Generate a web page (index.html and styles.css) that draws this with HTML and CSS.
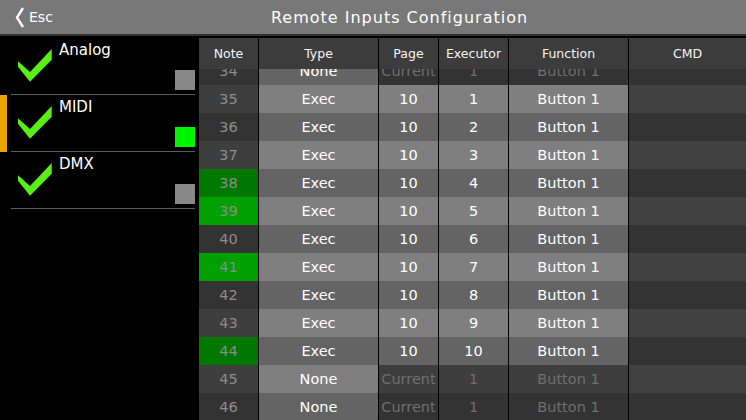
FILE: index.html
```html
<!DOCTYPE html>
<html>
<head>
<meta charset="utf-8">
<link rel="stylesheet" href="styles.css">
</head>
<body>
<div class="app">
  <header class="topbar">
    <div class="esc">
      <svg class="chev" width="10" height="22" viewBox="0 0 10 22"><polyline points="8,1 2,10.5 8,20" fill="none" stroke="#fff" stroke-width="2.4" stroke-linejoin="miter"/></svg>
      <span>Esc</span>
    </div>
    <div class="title">Remote Inputs Configuration</div>
  </header>
  <div class="main">
    <aside class="sidebar">
      <div class="item">
        <div class="ind"></div>
        <div class="item-body">
          <svg class="check" width="34" height="34" viewBox="0 0 34 34"><polygon points="0,12.3 12,23 33.7,0 33.7,10.7 12,32.7 0,17.7" fill="#5aef14"/></svg>
          <span class="label">Analog</span>
          <span class="sq"></span>
        </div>
      </div>
      <div class="item">
        <div class="ind on"></div>
        <div class="item-body">
          <svg class="check" width="34" height="34" viewBox="0 0 34 34"><polygon points="0,12.3 12,23 33.7,0 33.7,10.7 12,32.7 0,17.7" fill="#5aef14"/></svg>
          <span class="label">MIDI</span>
          <span class="sq green"></span>
        </div>
      </div>
      <div class="item">
        <div class="ind"></div>
        <div class="item-body">
          <svg class="check" width="34" height="34" viewBox="0 0 34 34"><polygon points="0,12.3 12,23 33.7,0 33.7,10.7 12,32.7 0,17.7" fill="#5aef14"/></svg>
          <span class="label">DMX</span>
          <span class="sq"></span>
        </div>
      </div>
    </aside>
    <section class="grid">
      <div class="thead">
        <div class="c note">Note</div>
        <div class="c type">Type</div>
        <div class="c page">Page</div>
        <div class="c exe">Executor</div>
        <div class="c func">Function</div>
        <div class="c cmd">CMD</div>
      </div>
      <div class="tbody">
        <div class="rows">
          <div class="row even none"><div class="c note">34</div><div class="c type">None</div><div class="c page">Current</div><div class="c exe">1</div><div class="c func">Button 1</div><div class="c cmd"></div></div>
          <div class="row odd"><div class="c note">35</div><div class="c type">Exec</div><div class="c page">10</div><div class="c exe">1</div><div class="c func">Button 1</div><div class="c cmd"></div></div>
          <div class="row even"><div class="c note">36</div><div class="c type">Exec</div><div class="c page">10</div><div class="c exe">2</div><div class="c func">Button 1</div><div class="c cmd"></div></div>
          <div class="row odd"><div class="c note">37</div><div class="c type">Exec</div><div class="c page">10</div><div class="c exe">3</div><div class="c func">Button 1</div><div class="c cmd"></div></div>
          <div class="row even active"><div class="c note">38</div><div class="c type">Exec</div><div class="c page">10</div><div class="c exe">4</div><div class="c func">Button 1</div><div class="c cmd"></div></div>
          <div class="row odd active"><div class="c note">39</div><div class="c type">Exec</div><div class="c page">10</div><div class="c exe">5</div><div class="c func">Button 1</div><div class="c cmd"></div></div>
          <div class="row even"><div class="c note">40</div><div class="c type">Exec</div><div class="c page">10</div><div class="c exe">6</div><div class="c func">Button 1</div><div class="c cmd"></div></div>
          <div class="row odd active"><div class="c note">41</div><div class="c type">Exec</div><div class="c page">10</div><div class="c exe">7</div><div class="c func">Button 1</div><div class="c cmd"></div></div>
          <div class="row even"><div class="c note">42</div><div class="c type">Exec</div><div class="c page">10</div><div class="c exe">8</div><div class="c func">Button 1</div><div class="c cmd"></div></div>
          <div class="row odd"><div class="c note">43</div><div class="c type">Exec</div><div class="c page">10</div><div class="c exe">9</div><div class="c func">Button 1</div><div class="c cmd"></div></div>
          <div class="row even active"><div class="c note">44</div><div class="c type">Exec</div><div class="c page">10</div><div class="c exe">10</div><div class="c func">Button 1</div><div class="c cmd"></div></div>
          <div class="row odd none"><div class="c note">45</div><div class="c type">None</div><div class="c page">Current</div><div class="c exe">1</div><div class="c func">Button 1</div><div class="c cmd"></div></div>
          <div class="row even none"><div class="c note">46</div><div class="c type">None</div><div class="c page">Current</div><div class="c exe">1</div><div class="c func">Button 1</div><div class="c cmd"></div></div>
        </div>
      </div>
    </section>
  </div>
</div>
</body>
</html>
```
FILE: styles.css
```css
* { box-sizing: border-box; }
html, body { margin: 0; padding: 0; background: #000; }
body {
  width: 746px;
  height: 420px;
  overflow: hidden;
  font-family: "DejaVu Sans", sans-serif;
  color: #fff;
}
.app { display: flex; flex-direction: column; height: 420px; }

.topbar {
  height: 36px;
  flex: none;
  background: #787878;
  border-bottom: 2px solid #303030;
  display: flex;
  align-items: center;
}
.esc {
  width: 53px;
  display: flex;
  align-items: center;
  padding-left: 15px;
  gap: 4px;
  font-size: 14px;
  line-height: 16px;
}
.chev { display: block; margin-top: 1px; }
.title {
  flex: 1;
  text-align: center;
  font-size: 16px;
  letter-spacing: 1px;
  line-height: 18px;
  padding-top: 1px;
}

.main { flex: 1; display: flex; min-height: 0; }

.sidebar {
  width: 199px;
  flex: none;
  padding-top: 2px;
  padding-right: 4px;
}
.item { display: flex; height: 57px; }
.ind { width: 7px; margin-right: 4px; }
.ind.on { background: #e9a600; }
.item-body {
  flex: 1;
  display: flex;
  border-bottom: 1px solid #5c5c5c;
}
.check { flex: none; margin: 11px 0 0 7px; }
.label {
  font-size: 15px;
  line-height: 18px;
  margin: 3px 0 0 7px;
}
.sq {
  width: 20px;
  height: 20px;
  background: #888;
  margin-left: auto;
  align-self: flex-end;
  margin-bottom: 4px;
}
.sq.green { background: #00f400; }

.grid {
  flex: 1;
  display: flex;
  flex-direction: column;
  padding-top: 2px;
  min-width: 0;
}
.thead { display: flex; height: 31px; flex: none; background: #3c3c3c; }
.thead .c { font-size: 12.5px; line-height: 31px; color: #f4f4f4; }
.c {
  text-align: center;
  border-right: 1px solid #000;
  white-space: nowrap;
  overflow: hidden;
}
.note { width: 60px; }
.type { width: 120px; }
.page { width: 60px; }
.exe { width: 70px; }
.func { width: 120px; }
.c.cmd { flex: 1; border-right: none; }

.tbody { flex: 1; overflow: hidden; }
.rows { margin-top: -12px; }
.row { display: flex; height: 28px; }
.row .c { font-size: 14.5px; line-height: 28px; }
.row .note { color: #8c8c8c; }

.row.odd .note { background: #3e3e3e; }
.row.even .note { background: #333; }
.row.odd.active .note { background: #00a000; }
.row.even.active .note { background: #007800; }

.row.odd .type, .row.odd .page, .row.odd .exe, .row.odd .func { background: #7f7f7f; }
.row.even .type, .row.even .page, .row.even .exe, .row.even .func { background: #646464; }
.row.odd .cmd { background: #414141; }
.row.even .cmd { background: #333; }

.row.none.odd .page, .row.none.odd .exe, .row.none.odd .func { background: #3e3e3e; color: #6e6e6e; }
.row.none.even .page, .row.none.even .exe, .row.none.even .func { background: #333; color: #6e6e6e; }
```
